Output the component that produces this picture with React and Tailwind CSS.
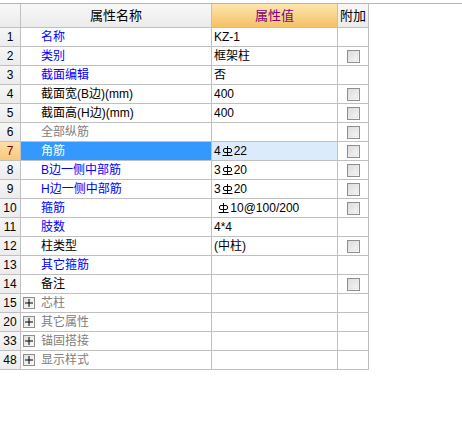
import React from 'react';

const BLUE = 'text-[#0000ff]';
const BLACK = 'text-black';
const GRAY = 'text-[#808080]';

const rows = [
  { no: '1', name: '名称', color: BLUE, value: 'KZ-1', check: false },
  { no: '2', name: '类别', color: BLUE, value: '框架柱', check: true },
  { no: '3', name: '截面编辑', color: BLUE, value: '否', check: false },
  { no: '4', name: '截面宽(B边)(mm)', color: BLACK, value: '400', check: true },
  { no: '5', name: '截面高(H边)(mm)', color: BLACK, value: '400', check: true },
  { no: '6', name: '全部纵筋', color: GRAY, value: '', check: true },
  { no: '7', name: '角筋', color: BLUE, value: ['4', 'bar', '22'], check: true, selected: true },
  { no: '8', name: 'B边一侧中部筋', color: BLUE, value: ['3', 'bar', '20'], check: true },
  { no: '9', name: 'H边一侧中部筋', color: BLUE, value: ['3', 'bar', '20'], check: true },
  { no: '10', name: '箍筋', color: BLUE, value: [' ', 'bar', '10@100/200'], check: true },
  { no: '11', name: '肢数', color: BLUE, value: '4*4', check: false },
  { no: '12', name: '柱类型', color: BLACK, value: '(中柱)', check: true },
  { no: '13', name: '其它箍筋', color: BLUE, value: '', check: false },
  { no: '14', name: '备注', color: BLACK, value: '', check: true },
  { no: '15', name: '芯柱', group: true },
  { no: '20', name: '其它属性', group: true },
  { no: '33', name: '锚固搭接', group: true },
  { no: '48', name: '显示样式', group: true },
];

const BarSymbol = () => (
  <svg width="11" height="12" viewBox="0 0 11 12" className="inline-block align-[-1px] mx-[1px]">
    <path d="M5.5 1V10" stroke="black" strokeWidth="1" />
    <rect x="1.5" y="3.5" width="8" height="4" rx="1.5" fill="none" stroke="black" strokeWidth="1" />
    <path d="M0.5 10.5H10.5" stroke="black" strokeWidth="1" />
  </svg>
);

const Checkbox = () => (
  <div className="w-[13px] h-[13px] border border-[#8e8e8e] bg-linear-to-br from-[#d8d8d8] to-[#fbfbfb] p-[1px]">
    <div className="w-full h-full border border-[#e6e6e6]" />
  </div>
);

const PlusBox = () => (
  <div className="w-[12px] h-[12px] border border-[#8e8e8e] bg-linear-to-br from-[#e2e2e2] to-[#fafafa] flex items-center justify-center mr-[6px]">
    <svg width="8" height="8" viewBox="0 0 8 8">
      <path d="M0 4H8M4 0V8" stroke="black" strokeWidth="1" />
    </svg>
  </div>
);

const cell = 'border-r border-b border-[#c0c0c0] h-[19px] flex items-center';

const renderValue = (value) => {
  if (Array.isArray(value)) {
    return value.map((v, i) =>
      v === 'bar' ? <BarSymbol key={i} /> : <span key={i} className="whitespace-pre">{v}</span>
    );
  }
  return value;
};

export default function App() {
  return (
    <div
      className="w-[462px] h-[424px] bg-white text-[12px] leading-[18px]"
      style={{ fontFamily: '"Liberation Sans", "Noto Sans CJK SC", sans-serif' }}
    >
      <div className="h-[3px]" />
      <div className="h-px w-full bg-[#b4b4b4]" />
      <div className="grid grid-cols-[21px_191px_126px_31px] w-[369px]">
        {/* header */}
        <div className="border-r border-b border-[#c0c0c0] h-[24px] bg-linear-to-b from-[#f8f8f8] to-[#ebebeb]" />
        <div className="border-r border-b border-[#c0c0c0] h-[24px] bg-linear-to-b from-[#f8f8f8] to-[#ebebeb] flex items-center justify-center text-[13px] text-black">
          属性名称
        </div>
        <div className="border-r border-b border-[#c0c0c0] h-[24px] bg-linear-to-b from-[#fde6ae] to-[#f4c164] flex items-center justify-center text-[13px] text-[#800080]">
          属性值
        </div>
        <div className="border-r border-b border-[#c0c0c0] h-[24px] bg-linear-to-b from-[#f8f8f8] to-[#ebebeb] flex items-center justify-center text-[13px] text-black">
          附加
        </div>

        {rows.map((r) => (
          <React.Fragment key={r.no}>
            <div
              className={
                cell +
                ' justify-center ' +
                (r.selected
                  ? 'bg-linear-to-b from-[#fde0a8] to-[#f7c87a] text-[#800000]'
                  : 'bg-linear-to-b from-[#f6f6f6] to-[#ececec] text-black')
              }
            >
              {r.no}
            </div>
            {r.group ? (
              <div className={cell + ' pl-[2px] ' + GRAY}>
                <PlusBox />
                {r.name}
              </div>
            ) : (
              <div
                className={
                  cell +
                  ' pl-[20px] ' +
                  (r.selected ? 'bg-[#3399ff] text-white' : r.color)
                }
              >
                {r.name}
              </div>
            )}
            <div
              className={
                cell + ' pl-[2px] text-black ' + (r.selected ? 'bg-[#dcebfc]' : '')
              }
            >
              {r.group ? null : renderValue(r.value)}
            </div>
            <div className={cell + ' justify-center'}>
              {r.check ? <Checkbox /> : null}
            </div>
          </React.Fragment>
        ))}
      </div>
    </div>
  );
}
